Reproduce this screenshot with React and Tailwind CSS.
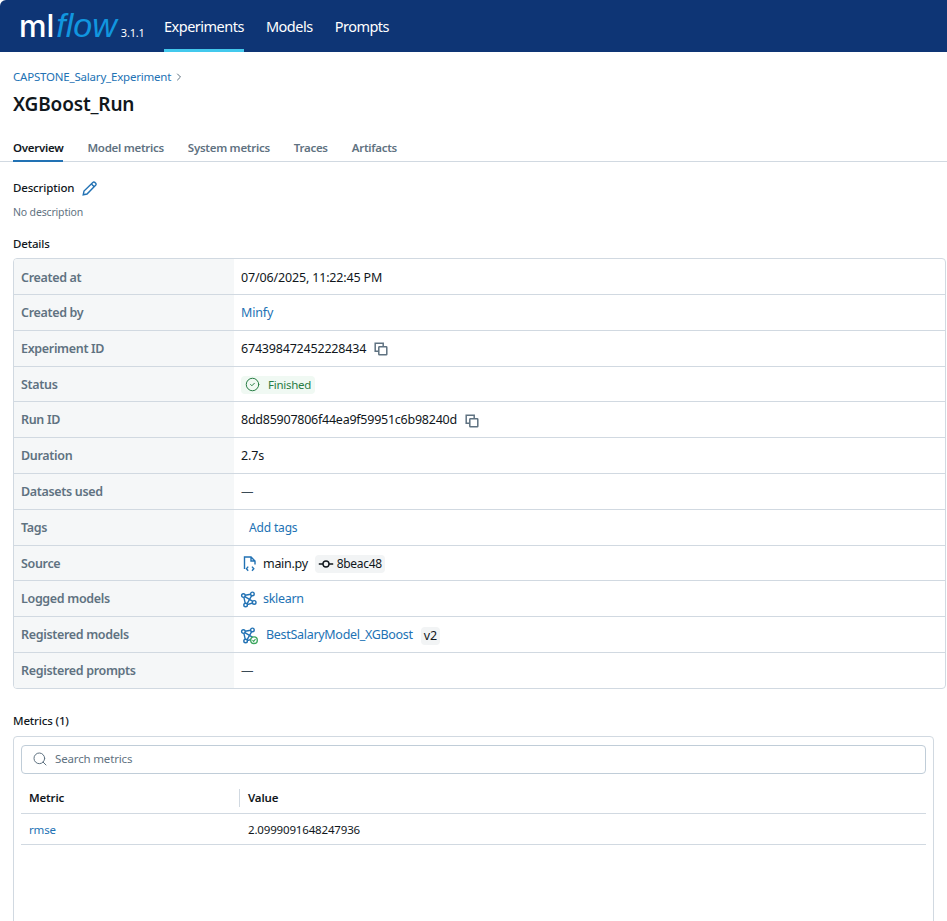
import { Search, ChevronRight, CircleCheck } from 'lucide-react';

const FONT = "font-['Noto_Sans',sans-serif]";

// ── Model icon (nodes joined by lines) ───────────────────────────────────────
function ModelIcon({ check }) {
  return (
    <svg width="16" height="16" viewBox="0 0 16 16" fill="none" stroke="#2272b4" strokeWidth="1.4" className="overflow-visible">
      <circle cx="2.4" cy="3.6" r="1.8" />
      <circle cx="11.4" cy="1.9" r="1.8" />
      <circle cx="4.6" cy="13" r="1.8" />
      {!check && <circle cx="13.2" cy="10.4" r="1.8" />}
      <path d="M4.2 3.3 9.6 2.3M2.9 5.3 4.2 11.2M3.9 4.6 11.8 9.4M10.7 3.6 6 11.8M6.4 12.6 11.5 11" />
      {check && (
        <g>
          <circle cx="13" cy="12.2" r="3.3" fill="#fff" stroke="#3ba65e" strokeWidth="1.4" />
          <path d="M11.5 12.2 12.6 13.3 14.5 11.2" stroke="#3ba65e" strokeWidth="1.2" />
        </g>
      )}
    </svg>
  );
}

function CopyButton() {
  return (
    <svg width="14" height="14" viewBox="0 0 14 14" fill="none" stroke="#5f7281" strokeWidth="1.5" className="ml-2">
      <path d="M9.2 4.8V1.2H1.2V9.2H4.8" />
      <rect x="4.8" y="4.8" width="8" height="8" rx="0.6" />
    </svg>
  );
}

function PencilIcon() {
  return (
    <svg width="15" height="15" viewBox="0 0 15 15" fill="none" stroke="#2272b4" strokeWidth="1.4" className="ml-2">
      <path d="M1.2 13.8 2 10 10.8 1.4Q11.8.5 12.9 1.4L13.7 2.2Q14.5 3.2 13.6 4.2L5 13Z" />
      <path d="M9.4 2.9 12.2 5.7" />
    </svg>
  );
}

function FileCodeIcon() {
  return (
    <svg width="14" height="16" viewBox="0 0 14 16" fill="none" stroke="#2272b4" strokeWidth="1.4" className="mr-[6px] ml-[2px]">
      <path d="M1.5 13V1H8L12 5V8.5M8 1V5H12" />
      <path d="M5.2 10.6 3.4 12.7 5.2 14.8M9 10.6 10.8 12.7 9 14.8" />
    </svg>
  );
}

function CommitIcon() {
  return (
    <svg width="16" height="16" viewBox="0 0 16 16" fill="none" stroke="#11171c" strokeWidth="1.4">
      <circle cx="8" cy="8" r="3" />
      <path d="M0.8 8H5M11 8H15.2" />
    </svg>
  );
}

const Empty = () => <span className="text-[#3a4a55]">—</span>;

const DETAILS = [
  ['Created at', <span>07/06/2025, 11:22:45 PM</span>],
  ['Created by', <span className="text-[#2272b4]">Minfy</span>],
  ['Experiment ID', <span className="flex items-center tracking-[-0.2px]">674398472452228434<CopyButton /></span>],
  ['Status', (
    <span className="flex items-center h-[18px] bg-[#f0f9f3] rounded-[4px] px-1 text-[#277c43] text-[11.5px] tracking-[-0.25px] gap-2">
      <CircleCheck size={15} strokeWidth={1.6} />Finished
    </span>
  )],
  ['Run ID', <span className="flex items-center tracking-[-0.25px]">8dd85907806f44ea9f59951c6b98240d<CopyButton /></span>],
  ['Duration', <span>2.7s</span>],
  ['Datasets used', <Empty />],
  ['Tags', <span className="pl-2 text-[#2272b4] text-[12px]">Add tags</span>],
  ['Source', (
    <span className="flex items-center tracking-[-0.3px]">
      <FileCodeIcon />
      main.py
      <span className="flex items-center ml-[7px] h-[18px] bg-[#f2f4f5] rounded-[4px] px-[3px] gap-[3px] text-[12px]">
        <CommitIcon />8beac48
      </span>
    </span>
  )],
  ['Logged models', (
    <span className="flex items-center gap-[6px] text-[#2272b4] tracking-[-0.3px]"><ModelIcon />sklearn</span>
  )],
  ['Registered models', (
    <span className="flex items-center">
      <ModelIcon check />
      <span className="ml-[9px] text-[#2272b4] tracking-[-0.3px]">BestSalaryModel_XGBoost</span>
      <span className="ml-2 h-[18px] px-[3px] bg-[#f2f4f5] rounded-[4px] leading-[18px]">v2</span>
    </span>
  )],
  ['Registered prompts', <Empty />],
];

export default function App() {
  return (
    <div className={`h-[921px] overflow-hidden bg-white text-[12.5px] tracking-[-0.16px] text-[#11171c] ${FONT}`}>

      {/* ── HEADER ─────────────────────────────────────────────────────────── */}
      <header className="h-[52px] bg-[#0e3575] rounded-tl-[6px] flex pl-[19px] text-white">
        <div className="flex items-baseline w-[145px] tracking-normal">
          <span className="text-[31px] leading-[50px] font-medium font-['Inter',sans-serif]">ml</span>
          <span className="text-[34px] leading-[50px] italic text-[#1196df] font-['Liberation_Sans',sans-serif] ml-[2px] mr-[4px]">flow</span>
          <span className="text-[11px] tracking-[-0.2px]">3.1.1</span>
        </div>
        <nav className="flex gap-[22px] text-[14.5px] tracking-[-0.5px]">
          <span className="flex items-center border-b-[3px] border-[#43c9ed] pt-[5px]">Experiments</span>
          <span className="flex items-center border-b-[3px] border-transparent pt-[5px]">Models</span>
          <span className="flex items-center border-b-[3px] border-transparent pt-[5px]">Prompts</span>
        </nav>
      </header>

      <main>
        {/* ── TITLE ──────────────────────────────────────────────────────────── */}
        <div className="pl-[13px] pt-[16px]">
          <div className="flex items-center h-[18px] text-[11.5px] text-[#2272b4] tracking-[-0.2px]">
            CAPSTONE_Salary_Experiment
            <ChevronRight size={12} className="text-[#5f7281] ml-[2px]" />
          </div>
          <h1 className="mt-[6px] h-[24px] leading-[24px] text-[19px] font-semibold">XGBoost_Run</h1>
        </div>

        {/* ── TABS ───────────────────────────────────────────────────────────── */}
        <div className="mt-[18px] pl-[13px] h-[28px] flex gap-6 border-b border-[#d1d9e1] text-[11.5px] font-semibold tracking-[-0.28px] text-[#5f7281]">
          <span className="h-[28px] border-b-2 border-[#2272b4] text-[#11171c] leading-[28px]">Overview</span>
          <span className="leading-[28px]">Model metrics</span>
          <span className="leading-[28px]">System metrics</span>
          <span className="leading-[28px]">Traces</span>
          <span className="leading-[28px]">Artifacts</span>
        </div>

        {/* ── DESCRIPTION ────────────────────────────────────────────────────── */}
        <div className="pl-[13px] pt-[17px]">
          <div className="flex items-center h-[18px] text-[11.5px] font-medium">
            Description
            <PencilIcon />
          </div>
          <p className="mt-[6px] h-[18px] leading-[18px] text-[10.5px] text-[#5f7281]">No description</p>
          <p className="mt-[14px] h-[18px] leading-[18px] text-[11.5px] font-medium">Details</p>
        </div>

        {/* ── DETAILS TABLE ──────────────────────────────────────────────────── */}
        <div className="ml-[13px] mr-px mt-[5px] border border-[#d1d9e1] rounded-[4px] overflow-hidden">
          {DETAILS.map(([label, value], i) => (
            <div key={label} className={`flex ${i > 0 ? 'h-[35.8px] border-t border-[#d1d9e1]' : 'h-[35px]'}`}>
              <div className={`w-[220px] shrink-0 bg-[#f5f7f8] pl-[7px] flex items-center font-semibold text-[#5f7281] tracking-[-0.33px] ${i > 0 ? 'pt-[2px]' : 'pt-[4px]'}`}>{label}</div>
              <div className={`pl-[7px] flex items-center ${i > 0 ? 'pt-[2px]' : 'pt-[4px]'}`}>{value}</div>
            </div>
          ))}
        </div>

        {/* ── METRICS ────────────────────────────────────────────────────── */}
        <p className="ml-[13px] mt-[23px] h-[18px] leading-[18px] text-[11.5px] font-medium">Metrics (1)</p>
        <div className="ml-[13px] mr-[13px] mt-[6px] h-[300px] border border-[#d1d9e1] rounded-[4px] px-[7px] pt-2">
          <div className="h-[29px] pb-px border border-[#c0cdd8] rounded-[4px] flex items-center pl-[10px] gap-[7px] text-[11.5px] text-[#5f7281]">
            <Search size={16} strokeWidth={1.5} />
            Search metrics
          </div>
          <div className="flex h-[40px] pt-[15px] border-b border-[#d1d9e1] text-[11.5px] font-semibold">
            <div className="w-[219px] pl-2 h-[18px] leading-[18px] border-r border-[#d1d9e1]">Metric</div>
            <div className="pl-2 h-[18px] leading-[18px]">Value</div>
          </div>
          <div className="flex items-center h-[31px] pt-[2px] border-b border-[#d1d9e1] text-[11.5px]">
            <div className="w-[219px] pl-2 text-[#2272b4]">rmse</div>
            <div className="pl-2">2.0999091648247936</div>
          </div>
        </div>
      </main>
    </div>
  );
}
